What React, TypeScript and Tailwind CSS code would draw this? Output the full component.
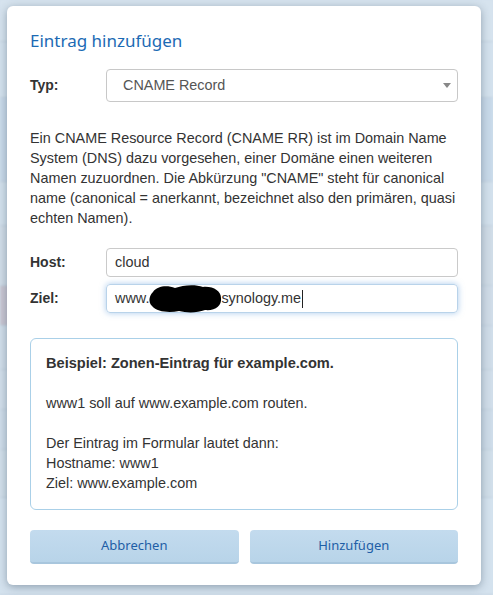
import React from "react";

// Faded page rows that sit behind the dialog overlay
const backdropRows = [
	{ h: "h-[42px]", bg: "bg-[#d6e3ee]" },
	{ h: "h-[56px]", bg: "bg-[#d3e1ed]" },
	{ h: "h-[84px]", bg: "bg-[#c8d9e9]" },
	{ h: "h-[44px]", bg: "bg-[#d2e0ec]" },
	{ h: "h-[60px]", bg: "bg-[#cfdbe6]" },
	{ h: "h-[40px]", bg: "bg-gradient-to-r from-[#c9c6d2] via-[#cfdbe7] to-[#cfdbe7]" },
	{ h: "h-[44px]", bg: "bg-[#cfdce8]" },
	{ h: "h-[40px]", bg: "bg-[#d0dde9]" },
	{ h: "h-[40px]", bg: "bg-[#cddbe8]" },
	{ h: "h-[48px]", bg: "bg-[#d0dee9]" },
	{ h: "h-[97px]", bg: "bg-[#d4e2ee]" },
];

function Blob() {
	return (
		<svg width="76" height="30" viewBox="0 0 76 30" className="-mx-[2px] -my-[8px] shrink-0">
			<path
				d="M6 8 C10 2 20 1 28 4 C36 1 48 0 56 3 C66 2 74 7 74 14 C75 22 68 27 58 26 C50 29 40 29 32 27 C22 29 10 28 5 22 C1 18 2 12 6 8 Z"
				fill="#000"
			/>
		</svg>
	);
}

export default function App() {
	return (
		<div className="relative w-[493px] h-[595px] overflow-hidden bg-[#d2e0ec] font-['Liberation_Sans',Arial,sans-serif]">
			{/* background page */}
			<div className="flex flex-col blur-[1px]">
				{backdropRows.map((row, i) => (
					<div key={i} className={`${row.h} ${row.bg} border-b border-[#c3d2df]`} />
				))}
			</div>

			{/* dialog */}
			<div className="absolute left-[7px] top-[6px] w-[474px] h-[579px] rounded-[6px] bg-white shadow-[0_2px_8px_rgba(60,80,100,0.45)] px-[23px] pt-[23px]">
				<h2 className="text-[17px] leading-[24px] text-[#1c6ab4] font-['Noto_Sans','Open_Sans',sans-serif]">
					Eintrag hinzufügen
				</h2>

				<div className="mt-[16px] flex items-center">
					<label className="w-[76px] text-[14px] font-bold text-[#333]">Typ:</label>
					<div className="flex-1 h-[33px] flex items-center justify-between rounded-[4px] border border-[#c8c8c8] pl-[16px] pr-[6px]">
						<span className="text-[14.4px] text-[#555]">CNAME Record</span>
						<svg width="8" height="5" viewBox="0 0 8 5">
							<path d="M0 0 H8 L4 5 Z" fill="#888" />
						</svg>
					</div>
				</div>

				<p className="mt-[26px] text-[14.4px] leading-[20px] text-[#333]">
					Ein CNAME Resource Record (CNAME RR) ist im Domain Name System (DNS) dazu vorgesehen, einer Domäne einen weiteren
					Namen zuzuordnen. Die Abkürzung "CNAME" steht für canonical name (canonical = anerkannt, bezeichnet also den
					primären, quasi echten Namen).
				</p>

				<div className="mt-[20px] flex items-center">
					<label className="w-[76px] text-[14px] font-bold text-[#333]">Host:</label>
					<div className="flex-1 h-[29px] flex items-center rounded-[4px] border border-[#cacaca] px-[8px] text-[14.4px] text-[#333]">
						cloud
					</div>
				</div>

				<div className="mt-[7px] flex items-center">
					<label className="w-[76px] text-[14px] font-bold text-[#333]">Ziel:</label>
					<div className="flex-1 h-[29px] flex items-center rounded-[4px] border border-[#b9d3ea] shadow-[0_0_6px_rgba(102,160,220,0.55)] px-[8px] text-[14.4px] text-[#333]">
						<span>www.</span>
						<Blob />
						<span>synology.me</span>
						<span className="ml-px w-px h-[18px] bg-[#222]" />
					</div>
				</div>

				<div className="mt-[25px] h-[172px] rounded-[6px] border border-[#aad0e8] px-[15px] pt-[14px] text-[14.4px] leading-[20px] text-[#333]">
					<p className="font-bold text-[14.6px]">Beispiel: Zonen-Eintrag für example.com.</p>
					<p className="mt-[20px]">www1 soll auf www.example.com routen.</p>
					<p className="mt-[20px]">Der Eintrag im Formular lautet dann:</p>
					<p>Hostname: www1</p>
					<p>Ziel: www.example.com</p>
				</div>

				<div className="mt-[20px] flex gap-[11px]">
					{["Abbrechen", "Hinzufügen"].map((label) => (
						<button
							key={label}
							className="flex-1 h-[34px] rounded-[4px] bg-gradient-to-b from-[#c3dbee] to-[#b8d4e9] border-b-2 border-[#a8c6dd] text-[13px] text-[#1e5ea6] font-['Noto_Sans','Open_Sans',sans-serif]"
						>
							{label}
						</button>
					))}
				</div>
			</div>
		</div>
	);
}
